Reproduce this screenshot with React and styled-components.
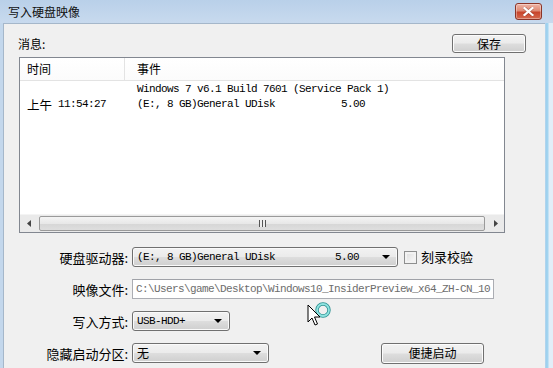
import styled, { createGlobalStyle } from 'styled-components';

const GlobalStyle = createGlobalStyle`
  html, body {
    margin: 0;
    padding: 0;
    background: #c8dbee;
  }
  body {
    font-family: "Noto Sans CJK SC", sans-serif;
    font-size: 12px;
    color: #000;
  }
`;

const Window = styled.div`
  position: relative;
  width: 553px;
  height: 368px;
  overflow: hidden;
  display: flex;
  flex-direction: column;
  background: linear-gradient(90deg, #c3d7ec 0, #c3d7ec 545px, #9cd0ee 546px, #a4d5f0 548px, #e2eef8 549px);
`;

const TitleBar = styled.div`
  height: 23px;
  flex: none;
  display: flex;
  align-items: center;
  justify-content: space-between;
  padding: 0 11px 0 8px;
  background: linear-gradient(#b9d0e9, #c8daee);
`;

const Title = styled.span`
  font-size: 12px;
  line-height: 14px;
  color: #111;
`;

const CloseButton = styled.div`
  width: 25px;
  height: 15px;
  border: 1px solid #8b3427;
  border-radius: 3px;
  background: linear-gradient(#eeb4a6 0%, #df8a74 45%, #c8442b 55%, #d56a4f 100%);
  display: flex;
  align-items: center;
  justify-content: center;
  box-shadow: inset 0 0 0 1px rgba(255, 255, 255, 0.35);
`;

const Body = styled.div`
  flex: 1;
  margin: 0 8px 0 3px;
  padding: 10px 0 0 15px;
  background: #f0f0f0;
  border-left: 1px solid #a5b7ca;
  border-top: 1px solid #a5b7ca;
`;

const TopRow = styled.div`
  width: 507px;
  height: 19px;
  display: flex;
  align-items: center;
  justify-content: space-between;
`;

const Caption = styled.span`
  line-height: 14px;
  margin-left: -1px;
`;

const PushButton = styled.div`
  width: ${(p) => p.$w}px;
  height: ${(p) => p.$h}px;
  box-sizing: border-box;
  border: 1px solid #707070;
  border-radius: 3px;
  background: linear-gradient(#f2f2f2 0%, #ebebeb 48%, #dddddd 52%, #cfcfcf 100%);
  box-shadow: inset 0 0 0 1px #fcfcfc;
  display: flex;
  align-items: center;
  justify-content: center;
  line-height: 14px;
`;

const ListBox = styled.div`
  margin-top: 4px;
  width: 486px;
  height: 176px;
  box-sizing: border-box;
  border: 1px solid #828790;
  background: #fff;
  display: flex;
  flex-direction: column;
`;

const Header = styled.div`
  height: 22px;
  flex: none;
  display: flex;
  border-bottom: 1px solid #e3e3e3;
  background: linear-gradient(#ffffff, #fbfbfb);
`;

const HeadCell = styled.div`
  width: ${(p) => (p.$w ? `${p.$w}px` : 'auto')};
  flex: ${(p) => (p.$w ? 'none' : 1)};
  box-sizing: border-box;
  padding-left: ${(p) => p.$pad}px;
  border-right: ${(p) => (p.$w ? '1px solid #e3e3e3' : 'none')};
  display: flex;
  align-items: center;
  line-height: 14px;
`;

const Rows = styled.div`
  flex: 1;
  padding-top: 1px;
`;

const Row = styled.div`
  height: 15px;
  display: flex;
  align-items: center;
`;

const Cell = styled.div`
  width: ${(p) => (p.$w ? `${p.$w}px` : 'auto')};
  flex: ${(p) => (p.$w ? 'none' : 1)};
  box-sizing: border-box;
  padding-left: ${(p) => p.$pad}px;
  white-space: pre;
  display: flex;
  align-items: center;
`;

const Ampm = styled.span`
  margin-right: 6px;
  font-size: 12.5px;
  line-height: 14px;
`;

const Mono = styled.span`
  font-family: "Liberation Mono", "Noto Sans CJK SC", monospace;
  font-size: 11px;
  letter-spacing: -0.6px;
  white-space: pre;
  color: ${(p) => p.$color || '#000'};
  line-height: 13px;
`;

const ScrollBar = styled.div`
  height: 17px;
  flex: none;
  display: flex;
  align-items: stretch;
  background: #eaeaea;
  border-top: 1px solid #f4f4f4;
`;

const ScrollArrow = styled.div`
  width: 17px;
  flex: none;
  display: flex;
  align-items: center;
  justify-content: center;
`;

const Thumb = styled.div`
  flex: 1;
  margin: 1px 2px;
  border: 1px solid #9a9a9a;
  border-radius: 2px;
  background: linear-gradient(#f4f4f4 0%, #e8e8e8 50%, #d6d6d6 51%, #dedede 100%);
  display: flex;
  align-items: center;
  justify-content: center;
`;

const Grip = styled.div`
  width: 7px;
  height: 7px;
  background: repeating-linear-gradient(90deg, #555 0 1px, #eee 1px 3px);
`;

const Form = styled.div`
  margin-top: 14px;
  display: flex;
  flex-direction: column;
  gap: 12px;
`;

const FormRow = styled.div`
  height: 20px;
  display: flex;
  align-items: center;
`;

const Label = styled.div`
  width: 113px;
  box-sizing: border-box;
  text-align: right;
  padding-right: 4px;
  flex: none;
  font-size: 13px;
  line-height: 15px;
`;

const Combo = styled.div`
  width: ${(p) => p.$w}px;
  height: 20px;
  box-sizing: border-box;
  flex: none;
  border: 1px solid #707070;
  border-radius: 3px;
  background: linear-gradient(#f2f2f2 0%, #ebebeb 48%, #dddddd 52%, #cfcfcf 100%);
  box-shadow: inset 0 0 0 1px #fafafa;
  display: flex;
  align-items: center;
  padding: 0 7px 0 4px;
`;

const ComboText = styled.div`
  flex: 1;
  display: flex;
  align-items: center;
  line-height: 14px;
`;

const DropArrow = styled.div`
  width: 0;
  height: 0;
  border-left: 4px solid transparent;
  border-right: 4px solid transparent;
  border-top: 4px solid #000;
`;

const TextField = styled.div`
  width: ${(p) => p.$w}px;
  height: 20px;
  box-sizing: border-box;
  border: 1px solid #abadb3;
  border-top-color: #a0a2a8;
  background: #fff;
  display: flex;
  align-items: center;
  padding-left: 3px;
  overflow: hidden;
`;

const CheckBox = styled.div`
  width: 13px;
  height: 13px;
  box-sizing: border-box;
  margin-left: 6px;
  border: 1px solid #8e8f8f;
  background: linear-gradient(135deg, #dcdcdc, #fbfbfb);
  box-shadow: inset 0 0 0 2px #f2f2f2;
`;

const CheckLabel = styled.span`
  margin-left: 4px;
  font-size: 13px;
  line-height: 14px;
`;

const Spacer = styled.div`
  width: ${(p) => p.$w}px;
  flex: none;
`;

const Cursor = styled.svg`
  position: absolute;
  left: 306px;
  top: 301px;
`;

export default function App() {
  return (
    <>
      <GlobalStyle />
      <Window>
        <TitleBar>
          <Title>写入硬盘映像</Title>
          <CloseButton>
            <svg width="11" height="9" viewBox="0 0 11 9">
              <path d="M1.5 1 L9.5 8 M9.5 1 L1.5 8" stroke="#5a1a10" strokeWidth="3.4" strokeLinecap="square" opacity="0.35" />
              <path d="M1.5 1 L9.5 8 M9.5 1 L1.5 8" stroke="#fff" strokeWidth="2.2" strokeLinecap="square" />
            </svg>
          </CloseButton>
        </TitleBar>
        <Body>
          <TopRow>
            <Caption>消息:</Caption>
            <PushButton $w={74} $h={19}>保存</PushButton>
          </TopRow>
          <ListBox>
            <Header>
              <HeadCell $w={105} $pad={7}>时间</HeadCell>
              <HeadCell $pad={12}>事件</HeadCell>
            </Header>
            <Rows>
              <Row>
                <Cell $w={105} $pad={7} />
                <Cell $pad={12}>
                  <Mono>Windows 7 v6.1 Build 7601 (Service Pack 1)</Mono>
                </Cell>
              </Row>
              <Row>
                <Cell $w={105} $pad={7}>
                  <Ampm>上午</Ampm>
                  <Mono>11:54:27</Mono>
                </Cell>
                <Cell $pad={12}>
                  <Mono>(E:, 8 GB)General UDisk           5.00</Mono>
                </Cell>
              </Row>
            </Rows>
            <ScrollBar>
              <ScrollArrow>
                <svg width="4" height="7" viewBox="0 0 4 7">
                  <path d="M4 0 L0 3.5 L4 7 Z" fill="#444" />
                </svg>
              </ScrollArrow>
              <Thumb>
                <Grip />
              </Thumb>
              <ScrollArrow>
                <svg width="4" height="7" viewBox="0 0 4 7">
                  <path d="M0 0 L4 3.5 L0 7 Z" fill="#444" />
                </svg>
              </ScrollArrow>
            </ScrollBar>
          </ListBox>
          <Form>
            <FormRow>
              <Label>硬盘驱动器:</Label>
              <Combo $w={266}>
                <ComboText>
                  <Mono>(E:, 8 GB)General UDisk          5.00</Mono>
                </ComboText>
                <DropArrow />
              </Combo>
              <CheckBox />
              <CheckLabel>刻录校验</CheckLabel>
            </FormRow>
            <FormRow>
              <Label>映像文件:</Label>
              <TextField $w={362}>
                <Mono $color="#6d6d6d">C:\Users\game\Desktop\Windows10_InsiderPreview_x64_ZH-CN_10</Mono>
              </TextField>
            </FormRow>
            <FormRow>
              <Label>写入方式:</Label>
              <Combo $w={98}>
                <ComboText>
                  <Mono>USB-HDD+</Mono>
                </ComboText>
                <DropArrow />
              </Combo>
            </FormRow>
            <FormRow>
              <Label>隐藏启动分区:</Label>
              <Combo $w={137}>
                <ComboText>无</ComboText>
                <DropArrow />
              </Combo>
              <Spacer $w={112} />
              <PushButton $w={103} $h={21}>便捷启动</PushButton>
            </FormRow>
          </Form>
        </Body>
        <Cursor width="26" height="30" viewBox="0 0 26 30">
          <circle cx="17" cy="9" r="6" fill="none" stroke="#2a8f90" strokeWidth="3.4" />
          <circle cx="17" cy="9" r="6" fill="none" stroke="#8fe3e0" strokeWidth="1.8" />
          <path d="M2 4 L2 21 L6 17 L9 24 L11.5 23 L8.5 16 L14 16 Z" fill="#fff" stroke="#000" strokeWidth="1" strokeLinejoin="round" />
        </Cursor>
      </Window>
    </>
  );
}
